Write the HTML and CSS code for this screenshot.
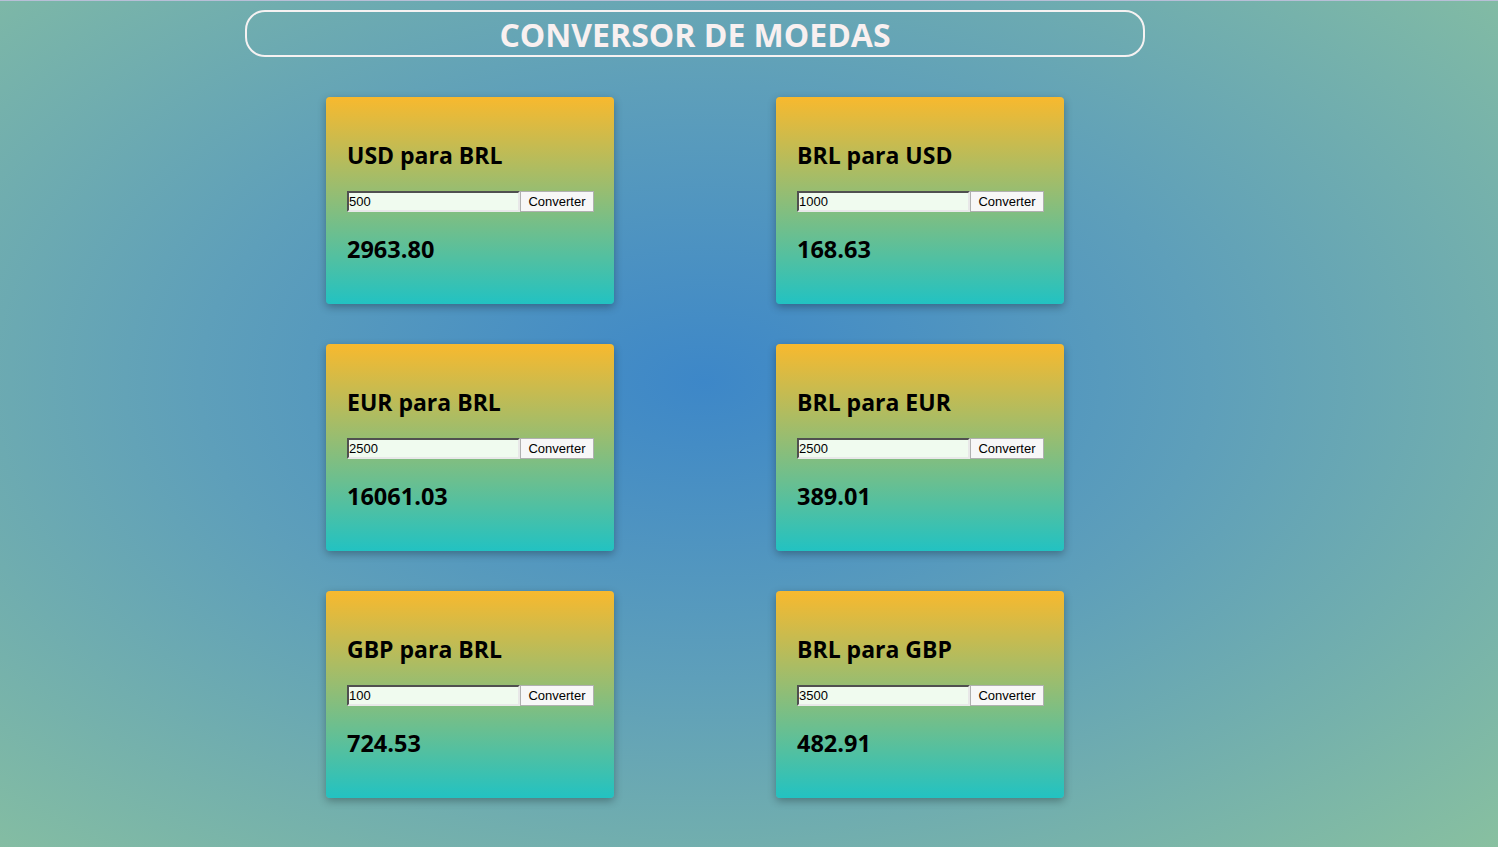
FILE: index.html
```html
<!DOCTYPE html>
<html lang="pt-BR">
<head>
<meta charset="utf-8">
<title>Conversor de Moedas</title>
<link rel="stylesheet" href="styles.css">
</head>
<body>
<div class="page">
  <div class="wrap">
    <h1 class="title">CONVERSOR DE MOEDAS</h1>
    <div class="grid">
      <div class="card">
        <h2 class="card-title">USD para BRL</h2>
        <div class="form"><input class="field" type="text" value="500"><button class="btn">Converter</button></div>
        <h2 class="result">2963.80</h2>
      </div>
      <div class="card">
        <h2 class="card-title">BRL para USD</h2>
        <div class="form"><input class="field" type="text" value="1000"><button class="btn">Converter</button></div>
        <h2 class="result">168.63</h2>
      </div>
      <div class="card">
        <h2 class="card-title">EUR para BRL</h2>
        <div class="form"><input class="field" type="text" value="2500"><button class="btn">Converter</button></div>
        <h2 class="result">16061.03</h2>
      </div>
      <div class="card">
        <h2 class="card-title">BRL para EUR</h2>
        <div class="form"><input class="field" type="text" value="2500"><button class="btn">Converter</button></div>
        <h2 class="result">389.01</h2>
      </div>
      <div class="card">
        <h2 class="card-title">GBP para BRL</h2>
        <div class="form"><input class="field" type="text" value="100"><button class="btn">Converter</button></div>
        <h2 class="result">724.53</h2>
      </div>
      <div class="card">
        <h2 class="card-title">BRL para GBP</h2>
        <div class="form"><input class="field" type="text" value="3500"><button class="btn">Converter</button></div>
        <h2 class="result">482.91</h2>
      </div>
    </div>
  </div>
</div>
</body>
</html>
```
FILE: styles.css
```css
html, body {
  margin: 0;
  padding: 0;
  background: #b8bfd7;
}
.page {
  margin-top: 1px;
  min-height: 846px;
  box-sizing: border-box;
  padding-top: 9px;
  background: radial-gradient(ellipse farthest-corner at 47% 45%, #3d87c8 0%, #5e9fba 45%, #88c0a0 100%);
  font-family: "Open Sans", "Noto Sans", sans-serif;
}
.wrap {
  width: 900px;
  margin-left: 245px;
}
.title {
  margin: 0;
  height: 47px;
  box-sizing: border-box;
  border: 2px solid #f6f2f2;
  border-radius: 20px;
  color: #f8f0f0;
  font-size: 32px;
  font-weight: 700;
  letter-spacing: 0;
  text-align: center;
  line-height: 46px;
}
.grid {
  margin-top: 40px;
  display: grid;
  grid-template-columns: 288px 288px;
  column-gap: 162px;
  row-gap: 40px;
  justify-content: center;
}
.card {
  height: 207px;
  box-sizing: border-box;
  padding: 42px 20px 0 21px;
  border-radius: 4px;
  background: linear-gradient(to bottom, #f8b92e 0%, #22c2c2 100%);
  box-shadow: 0 3px 8px rgba(0, 0, 0, 0.3);
}
.card-title {
  margin: 0;
  font-size: 23px;
  font-weight: 700;
  line-height: 32px;
  color: #000;
}
.form {
  margin-top: 20px;
  display: flex;
  height: 21px;
}
.field {
  width: 173px;
  height: 21px;
  box-sizing: border-box;
  margin: 0;
  padding: 0;
  border: 2px inset #a4a4a4;
  border-right-color: #e8e8e8;
  border-bottom-color: #e8e8e8;
  background: #f0fbef;
  font-family: "Liberation Sans", Arial, sans-serif;
  font-size: 13px;
  color: #000;
}
.btn {
  width: 75px;
  height: 21px;
  box-sizing: border-box;
  margin: 0;
  padding: 0;
  border: 1px solid #b0b0b0;
  border-radius: 0;
  background: #f7f7f7;
  font-family: "Liberation Sans", Arial, sans-serif;
  font-size: 13px;
  color: #000;
}
.result {
  margin: 21px 0 0;
  font-size: 23.5px;
  font-weight: 700;
  line-height: 32px;
  color: #000;
}
```
